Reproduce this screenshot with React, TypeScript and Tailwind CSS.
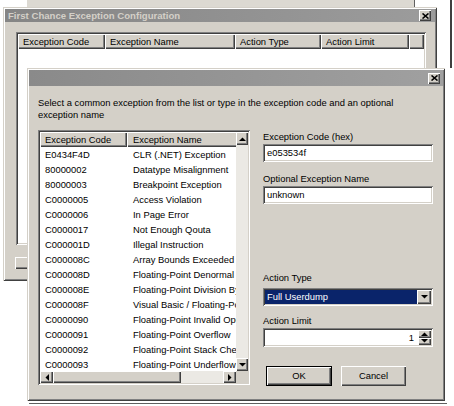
import React from "react";

const RAISED =
  "shadow-[inset_1px_1px_#d4d0c8,inset_-1px_-1px_#404040,inset_2px_2px_#ffffff,inset_-2px_-2px_#808080]";
const BTN =
  "shadow-[inset_1px_1px_#ffffff,inset_-1px_-1px_#404040,inset_-2px_-2px_#808080]";
const SUNKEN =
  "shadow-[inset_1px_1px_#808080,inset_-1px_-1px_#ffffff,inset_2px_2px_#404040,inset_-2px_-2px_#d4d0c8]";

function Tri({ dir }: { dir: "up" | "down" | "left" | "right" }) {
  const pts =
    dir === "up"
      ? "0,4 7,4 3.5,0.5"
      : dir === "down"
      ? "0,0 7,0 3.5,3.5"
      : dir === "left"
      ? "4,0 4,7 0.5,3.5"
      : "0,0 0,7 3.5,3.5";
  const w = dir === "up" || dir === "down" ? 7 : 4;
  const h = dir === "up" || dir === "down" ? 4 : 7;
  return (
    <svg width={w} height={h} viewBox={`0 0 ${w} ${h}`}>
      <polygon points={pts} fill="#000" />
    </svg>
  );
}

function ArrowBtn({ dir, cls = "" }: { dir: "up" | "down" | "left" | "right"; cls?: string }) {
  return (
    <div className={`flex items-center justify-center bg-[#d4d0c8] ${BTN} ${cls}`}>
      <Tri dir={dir} />
    </div>
  );
}

function CloseBtn() {
  return (
    <div className={`flex h-[11px] w-[12px] items-center justify-center bg-[#d4d0c8] ${BTN}`}>
      <svg width="7" height="6" viewBox="0 0 7 6">
        <path d="M0.5 0.5 L6.5 5.5 M6.5 0.5 L0.5 5.5" stroke="#000" strokeWidth="1.6" />
      </svg>
    </div>
  );
}

const rows: [string, string][] = [
  ["E0434F4D", "CLR (.NET) Exception"],
  ["80000002", "Datatype Misalignment"],
  ["80000003", "Breakpoint Exception"],
  ["C0000005", "Access Violation"],
  ["C0000006", "In Page Error"],
  ["C0000017", "Not Enough Qouta"],
  ["C000001D", "Illegal Instruction"],
  ["C000008C", "Array Bounds Exceeded"],
  ["C000008D", "Floating-Point Denormal Operand"],
  ["C000008E", "Floating-Point Division By Zero"],
  ["C000008F", "Visual Basic / Floating-Point Inexact Result"],
  ["C0000090", "Floating-Point Invalid Operation"],
  ["C0000091", "Floating-Point Overflow"],
  ["C0000092", "Floating-Point Stack Check"],
  ["C0000093", "Floating-Point Underflow"],
];

export default function App() {
  return (
    <div
      className="relative h-[406px] w-[454px] overflow-hidden bg-white text-[9.4px] leading-[12px] text-black"
      style={{ fontFamily: '"Liberation Sans", Arial, sans-serif' }}
    >
      {/* window peeking at top */}
      <div className="absolute left-[27px] top-[-12px] h-[20px] w-[388px] border-b border-r border-[#606060] bg-[#dcd9d2]" />
      {/* line at right */}
      <div className="absolute left-[450px] top-0 h-[68px] w-[2px] bg-[#404040]" />

      {/* back window */}
      <div className={`absolute left-[3px] top-[7px] flex h-[274px] w-[434px] flex-col bg-[#d4d0c8] p-[2px] ${RAISED}`}>
        <div className="flex h-[13px] items-center justify-between bg-gradient-to-r from-[#858585] to-[#9c9c9c] pl-[3px] pr-[4px]">
          <span className="text-[9.6px] font-bold text-[#d4d0c8]">First Chance Exception Configuration</span>
          <CloseBtn />
        </div>
        <div className={`ml-[11px] mt-[10px] h-[213px] w-[410px] bg-white p-[2px] ${SUNKEN}`}>
          <div className="flex h-[15px]">
            <div className={`flex w-[87px] items-center bg-[#d4d0c8] pl-[5px] ${BTN}`}>Exception Code</div>
            <div className={`flex w-[130px] items-center bg-[#d4d0c8] pl-[5px] ${BTN}`}>Exception Name</div>
            <div className={`flex w-[86px] items-center bg-[#d4d0c8] pl-[5px] ${BTN}`}>Action Type</div>
            <div className={`flex w-[88px] items-center bg-[#d4d0c8] pl-[5px] ${BTN}`}>Action Limit</div>
            <div className={`flex-1 bg-[#d4d0c8] ${BTN}`} />
          </div>
        </div>
        <div className={`ml-[10px] mt-[12px] h-[12px] w-[60px] bg-[#d4d0c8] ${BTN}`} />
      </div>

      {/* front dialog */}
      <div className={`absolute left-[27px] top-[68px] flex h-[333px] w-[418px] flex-col bg-[#d4d0c8] p-[2px] ${RAISED}`}>
        <div className="flex h-[16px] items-center justify-end bg-gradient-to-r from-[#8a8a8a] to-[#a0a0a0] pr-[3px]">
          <CloseBtn />
        </div>
        <div className="flex flex-1 flex-col px-[9px]">
          <p className="mt-[11px]">
            Select a common exception from the list or type in the exception code and an optional
            <br />
            exception name
          </p>
          <div className="mt-[9px] flex">
            {/* list */}
            <div className={`relative flex h-[255px] w-[212px] flex-col bg-white p-[2px] ${SUNKEN}`}>
              <div className="flex min-h-0 flex-1">
                <div className="flex min-w-0 flex-1 flex-col overflow-hidden">
                  <div className="flex h-[15px] shrink-0">
                    <div className={`flex w-[87px] shrink-0 items-center bg-[#d4d0c8] pl-[5px] ${BTN}`}>Exception Code</div>
                    <div className={`flex w-[140px] shrink-0 items-center bg-[#d4d0c8] pl-[6px] ${BTN}`}>Exception Name</div>
                  </div>
                  {rows.map(([c, n]) => (
                    <div key={c} className="flex h-[15px] shrink-0 items-center whitespace-nowrap">
                      <span className="w-[87px] shrink-0 pl-[5px]">{c}</span>
                      <span className="pl-[6px]">{n}</span>
                    </div>
                  ))}
                </div>
                {/* vertical scrollbar */}
                <div className="flex w-[12px] shrink-0 flex-col bg-[#ebe9e4]">
                  <ArrowBtn dir="up" cls="h-[13px]" />
                  <div className="flex-1" />
                  <ArrowBtn dir="down" cls="h-[13px]" />
                </div>
              </div>
              {/* horizontal scrollbar */}
              <div className="flex h-[12px] shrink-0">
                <div className="flex flex-1 bg-[#ebe9e4]">
                  <ArrowBtn dir="left" cls="w-[13px]" />
                  <div className={`w-[128px] bg-[#d4d0c8] ${BTN}`} />
                  <div className="flex-1" />
                  <ArrowBtn dir="right" cls="w-[13px]" />
                </div>
                <div className="w-[12px] bg-[#d4d0c8]" />
              </div>
            </div>

            {/* right column */}
            <div className="ml-[13px] flex w-[170px] flex-col">
              <span className="mt-[1px]">Exception Code (hex)</span>
              <div className={`mt-[1px] flex h-[18px] items-center bg-white px-[4px] ${SUNKEN}`}>e053534f</div>
              <span className="mt-[11px]">Optional Exception Name</span>
              <div className={`mt-[1px] flex h-[18px] items-center bg-white px-[4px] ${SUNKEN}`}>unknown</div>
              <span className="mt-[68px]">Action Type</span>
              <div className={`mt-[4px] flex h-[18px] items-center bg-white p-[2px] ${SUNKEN}`}>
                <div className="flex h-full flex-1 items-center bg-[#0a246a] pl-[2px] text-white">Full Userdump</div>
                <ArrowBtn dir="down" cls="h-full w-[14px]" />
              </div>
              <span className="mt-[9px]">Action Limit</span>
              <div className={`mt-[1px] flex h-[19px] items-center bg-white p-[2px] ${SUNKEN}`}>
                <div className="flex-1 pr-[4px] text-right">1</div>
                <div className="flex h-full w-[13px] flex-col">
                  <ArrowBtn dir="up" cls="flex-1" />
                  <ArrowBtn dir="down" cls="flex-1" />
                </div>
              </div>
              <div className="mt-[19px] flex gap-[9px] pl-[3px]">
                <div className="flex h-[20px] w-[66px] items-center justify-center border border-black bg-[#d4d0c8]">
                  <div className={`flex h-full w-full items-center justify-center ${BTN}`}>OK</div>
                </div>
                <div className={`flex h-[20px] w-[65px] items-center justify-center bg-[#d4d0c8] ${BTN}`}>Cancel</div>
              </div>
            </div>
          </div>
        </div>
      </div>
      {/* shadow line below dialog */}
      <div className="absolute left-[29px] top-[403px] h-[1px] w-[418px] bg-[#606060]" />
    </div>
  );
}
